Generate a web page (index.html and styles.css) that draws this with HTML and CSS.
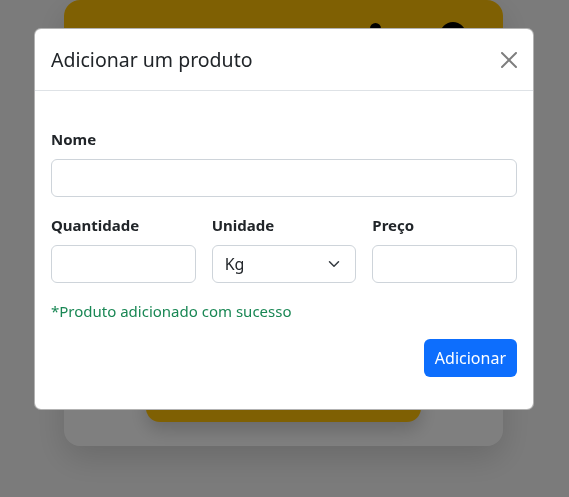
FILE: index.html
```html
<!DOCTYPE html>
<html lang="pt-BR">
<head>
<meta charset="utf-8">
<title>Adicionar um produto</title>
<link rel="stylesheet" href="styles.css">
</head>
<body>
  <main class="page">
    <section class="card">
      <header class="card-head">
        <span class="dot dot-small"></span>
        <span class="dot dot-big"></span>
      </header>
      <div class="card-body">
        <button class="buy-btn" type="button">Comprar</button>
      </div>
    </section>
  </main>

  <div class="backdrop"></div>

  <div class="modal" role="dialog" aria-labelledby="modal-title">
    <div class="modal-content">
      <div class="modal-header">
        <h5 class="modal-title" id="modal-title">Adicionar um produto</h5>
        <button class="btn-close" type="button" aria-label="Fechar">
          <svg viewBox="0 0 16 16" width="16" height="16" aria-hidden="true">
            <path d="M.293.293a1 1 0 0 1 1.414 0L8 6.586 14.293.293a1 1 0 1 1 1.414 1.414L9.414 8l6.293 6.293a1 1 0 0 1-1.414 1.414L8 9.414l-6.293 6.293a1 1 0 0 1-1.414-1.414L6.586 8 .293 1.707a1 1 0 0 1 0-1.414z"/>
          </svg>
        </button>
      </div>
      <div class="modal-body">
        <form class="form">
          <div class="field">
            <label class="label" for="nome">Nome</label>
            <input class="control" id="nome" type="text">
          </div>
          <div class="row">
            <div class="field">
              <label class="label" for="qtd">Quantidade</label>
              <input class="control" id="qtd" type="text">
            </div>
            <div class="field">
              <label class="label" for="un">Unidade</label>
              <div class="control select" id="un">
                <span>Kg</span>
                <svg class="chev" viewBox="0 0 16 16" width="16" height="12" preserveAspectRatio="xMidYMid meet" aria-hidden="true">
                  <path d="m2 5 6 6 6-6" fill="none" stroke="#343a40" stroke-width="2" stroke-linecap="round" stroke-linejoin="round"/>
                </svg>
              </div>
            </div>
            <div class="field">
              <label class="label" for="preco">Preço</label>
              <input class="control" id="preco" type="text">
            </div>
          </div>
          <p class="success">*Produto adicionado com sucesso</p>
          <div class="actions">
            <button class="btn-primary" type="button">Adicionar</button>
          </div>
        </form>
      </div>
    </div>
  </div>
</body>
</html>
```

FILE: styles.css
```css
* { box-sizing: border-box; }

html, body {
  margin: 0;
  height: 100%;
}

body {
  background: #f7f7f7;
  font-family: "Noto Sans", "Open Sans", sans-serif;
  color: #212529;
  overflow: hidden;
}

.page {
  padding: 0 0 0 64px;
}

.card {
  width: 439px;
  background: #fff;
  border-radius: 16px;
  overflow: hidden;
  box-shadow: 0 12px 32px rgba(0, 0, 0, 0.14);
}

.card-head {
  background: #ffc107;
  height: 140px;
  display: flex;
  align-items: flex-start;
  padding: 22px 37px 0 0;
  justify-content: flex-end;
  gap: 59px;
}

.dot {
  background: #000;
  border-radius: 50%;
  display: block;
}

.dot-small {
  width: 11px;
  height: 11px;
  margin-top: 1px;
}

.dot-big {
  width: 26px;
  height: 26px;
}

.card-body {
  height: 306px;
  display: flex;
  flex-direction: column;
  justify-content: flex-end;
  align-items: center;
  padding-bottom: 24px;
}

.buy-btn {
  width: 275px;
  height: 44px;
  border: 0;
  border-radius: 14px;
  background: #ffc107;
  color: #212529;
  font-family: inherit;
  font-size: 16px;
  font-weight: 600;
  line-height: 24px;
  padding: 0;
  box-shadow: 0 8px 18px rgba(0, 0, 0, 0.18);
}

.backdrop {
  position: fixed;
  inset: 0;
  background: rgba(0, 0, 0, 0.5);
}

.modal {
  position: fixed;
  top: 28px;
  left: 34px;
}

.modal-content {
  width: 500px;
  background: #fff;
  border: 1px solid rgba(0, 0, 0, 0.3);
  border-radius: 7px;
}

.modal-header {
  display: flex;
  align-items: center;
  justify-content: space-between;
  padding: 16px 16px 15px;
  border-bottom: 1px solid #dee2e6;
}

.modal-title {
  margin: 0;
  font-size: 19.5px;
  font-weight: 400;
  line-height: 30px;
}

.btn-close {
  border: 0;
  background: none;
  padding: 0;
  width: 16px;
  height: 16px;
  display: flex;
  fill: #000;
  opacity: 0.5;
}

.modal-body {
  padding: 36px 16px 32px;
}

.form {
  display: flex;
  flex-direction: column;
  gap: 16px;
}

.field {
  display: flex;
  flex-direction: column;
  gap: 8px;
}

.label {
  font-weight: 700;
  font-size: 15px;
  line-height: 24px;
}

.control {
  height: 38px;
  width: 100%;
  border: 1px solid #ced4da;
  border-radius: 6px;
  font-family: inherit;
  font-size: 16px;
  padding: 0 12px;
  background: #fff;
}

.row {
  display: grid;
  grid-template-columns: repeat(3, 1fr);
  gap: 16px;
}

.select {
  display: flex;
  align-items: center;
  justify-content: space-between;
  padding: 0 13px 0 12px;
  color: #212529;
}

.chev {
  display: block;
}

.success {
  margin: 0;
  color: #198754;
  font-size: 15px;
  line-height: 24px;
}

.actions {
  display: flex;
  justify-content: flex-end;
}

.btn-primary {
  height: 38px;
  padding: 0 11px;
  border: 0;
  border-radius: 6px;
  background: #0d6efd;
  color: #fff;
  font-family: inherit;
  font-size: 16px;
}
```
